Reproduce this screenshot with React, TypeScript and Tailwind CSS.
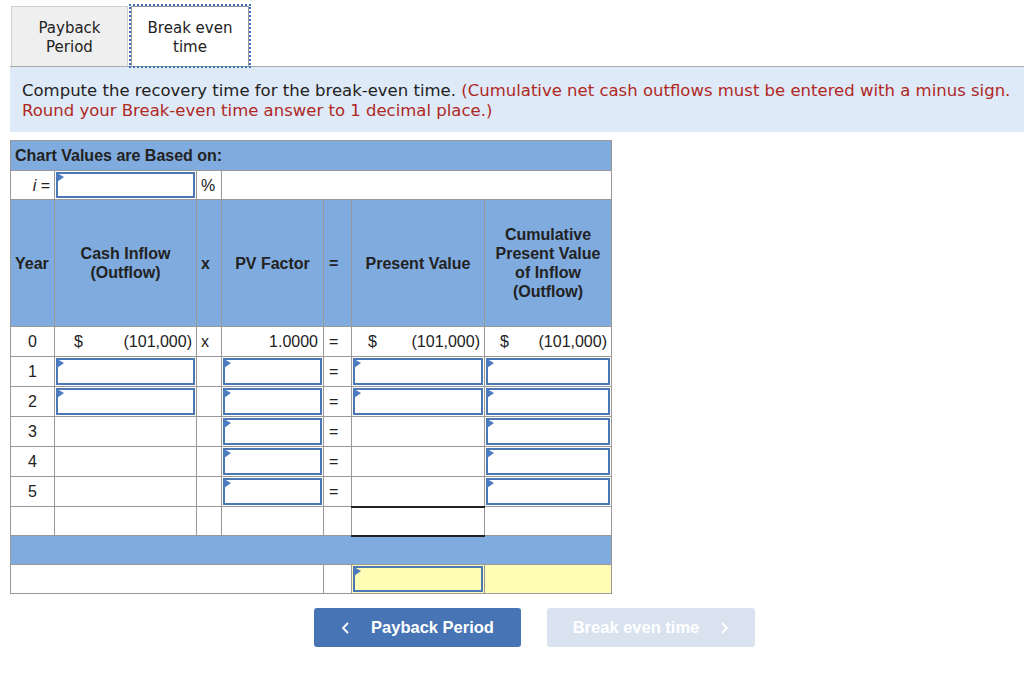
import React from "react";

const arial = { fontFamily: '"Liberation Sans", Arial, sans-serif' };

function Flag() {
  return (
    <svg
      className="absolute left-[-1px] top-[-1px]"
      width="8"
      height="10"
      viewBox="0 0 8 10"
    >
      <polygon points="0,0 7,4 0,9" fill="#4b7bc0" />
    </svg>
  );
}

function Input({ yellow = false }: { yellow?: boolean }) {
  return (
    <div
      className={`relative h-full w-full border-2 border-[#4b78b5] ${
        yellow ? "bg-[#fffdb5]" : "bg-white"
      }`}
    >
      <Flag />
    </div>
  );
}

const td = "border border-[#999] p-0 align-middle";

function Money({ pl, pr, v }: { pl: string; pr: string; v: string }) {
  return (
    <div className={`flex justify-between ${pl} ${pr}`}>
      <span>$</span>
      <span>{v}</span>
    </div>
  );
}

export default function App() {
  const rows = [1, 2, 3, 4, 5];
  return (
    <div className="w-[1024px] h-[676px] bg-white text-[#222]">
      {/* Tabs */}
      <div
        className="ml-[10px] flex pt-[6px] pl-px border-b border-[#aaa]"
        style={{ fontFamily: '"DejaVu Sans", Verdana, sans-serif' }}
      >
        <div className="w-[117px] h-[60px] pt-[2px] bg-[#efefef] border border-b-0 border-[#cfcfcf] flex items-center justify-center text-center text-[15px] leading-[19px] text-[#222]">
          Payback
          <br />
          Period
        </div>
        <div className="ml-[3px] w-[118px] h-[60px] pt-[2px] -mb-px bg-white border border-b-0 border-[#999] outline-2 outline-dotted outline-[#3a6fb8] flex items-center justify-center text-center text-[15px] leading-[19px] text-[#222]">
          Break even
          <br />
          time
        </div>
      </div>

      {/* Banner */}
      <div
        className="ml-[10px] bg-[#deeaf8] pl-[12px] pt-[14px] pb-[11px] text-[16.5px] leading-[20px] text-[#222]"
        style={{ fontFamily: '"DejaVu Sans", Verdana, sans-serif' }}
      >
        Compute the recovery time for the break-even time.{" "}
        <span className="text-[#b0281f]">
          (Cumulative net cash outflows must be entered with a minus sign.
          Round your Break-even time answer to 1 decimal place.)
        </span>
      </div>

      {/* Table */}
      <div className="ml-[10px] mt-[8px]" style={arial}>
        <table className="border-collapse table-fixed w-[601px] text-[16px] leading-[19px] text-[#222]">
          <colgroup>
            <col className="w-[44px]" />
            <col className="w-[142px]" />
            <col className="w-[25px]" />
            <col className="w-[102px]" />
            <col className="w-[28px]" />
            <col className="w-[133px]" />
            <col className="w-[127px]" />
          </colgroup>
          <tbody>
            <tr className="h-[30px]">
              <td colSpan={7} className={`${td} bg-[#80abdf] font-bold pl-[4px]`}>
                Chart Values are Based on:
              </td>
            </tr>
            <tr className="h-[29px]">
              <td className={`${td} text-right pr-[4px]`}>
                <i>i</i> =
              </td>
              <td className={`${td} h-[29px] p-px`}>
                <Input />
              </td>
              <td className={`${td} pl-[4px]`}>%</td>
              <td colSpan={4} className={td}></td>
            </tr>
            <tr className="h-[127px] bg-[#80abdf] font-bold">
              <td className={`${td} pl-[4px]`}>Year</td>
              <td className={`${td} text-center`}>
                Cash Inflow
                <br />
                (Outflow)
              </td>
              <td className={`${td} pl-[4px]`}>x</td>
              <td className={`${td} text-center`}>PV Factor</td>
              <td className={`${td} pl-[5px]`}>=</td>
              <td className={`${td} text-center`}>Present Value</td>
              <td className={`${td} text-center`}>
                Cumulative
                <br />
                Present Value
                <br />
                of Inflow
                <br />
                (Outflow)
              </td>
            </tr>
            <tr className="h-[30px]">
              <td className={`${td} text-center`}>0</td>
              <td className={td}>
                <Money pl="pl-[19px]" pr="pr-[4px]" v="(101,000)" />
              </td>
              <td className={`${td} pl-[4px]`}>x</td>
              <td className={`${td} text-right pr-[5px]`}>1.0000</td>
              <td className={`${td} pl-[5px]`}>=</td>
              <td className={td}>
                <Money pl="pl-[16px]" pr="pr-[4px]" v="(101,000)" />
              </td>
              <td className={td}>
                <Money pl="pl-[15px]" pr="pr-[4px]" v="(101,000)" />
              </td>
            </tr>
            {rows.map((r) => (
              <tr key={r} className="h-[30px]">
                <td className={`${td} text-center`}>{r}</td>
                <td className={`${td} h-[30px] p-px`}>{r <= 2 ? <Input /> : null}</td>
                <td className={td}></td>
                <td className={`${td} h-[30px] p-px`}>
                  <Input />
                </td>
                <td className={`${td} pl-[5px]`}>=</td>
                <td
                  className={`${td} h-[30px] p-px ${
                    r === 5 ? "border-b-2 border-b-[#222]" : ""
                  }`}
                >
                  {r <= 2 ? <Input /> : null}
                </td>
                <td className={`${td} h-[30px] p-px`}>
                  <Input />
                </td>
              </tr>
            ))}
            <tr className="h-[29px]">
              <td className={td}></td>
              <td className={td}></td>
              <td className={td}></td>
              <td className={td}></td>
              <td className={td}></td>
              <td className={`${td} border-b-2 border-b-[#222]`}></td>
              <td className={td}></td>
            </tr>
            <tr className="h-[29px]">
              <td colSpan={7} className={`${td} bg-[#80abdf]`}></td>
            </tr>
            <tr className="h-[29px]">
              <td colSpan={4} className={td}></td>
              <td className={td}></td>
              <td className={`${td} h-[29px] p-px bg-[#fffdb5]`}>
                <Input yellow />
              </td>
              <td className={`${td} bg-[#fffdb5]`}></td>
            </tr>
          </tbody>
        </table>
      </div>

      {/* Buttons */}
      <div className="flex ml-[314px] mt-[14px] gap-[26px]" style={arial}>
        <div className="w-[207px] h-[39px] rounded-[3px] bg-[#4674b4] flex items-center justify-center text-white font-bold text-[16.5px]">
          <svg width="10" height="14" viewBox="0 0 10 14" className="mr-[20px]">
            <polyline
              points="7,2 2,7 7,12"
              fill="none"
              stroke="white"
              strokeWidth="1.8"
            />
          </svg>
          Payback Period
        </div>
        <div className="w-[208px] h-[39px] rounded-[3px] bg-[#d8e3ef] flex items-center justify-center text-white font-bold text-[16.5px]">
          Break even time
          <svg width="10" height="14" viewBox="0 0 10 14" className="ml-[20px]">
            <polyline
              points="3,2 8,7 3,12"
              fill="none"
              stroke="white"
              strokeWidth="1.8"
            />
          </svg>
        </div>
      </div>
    </div>
  );
}
